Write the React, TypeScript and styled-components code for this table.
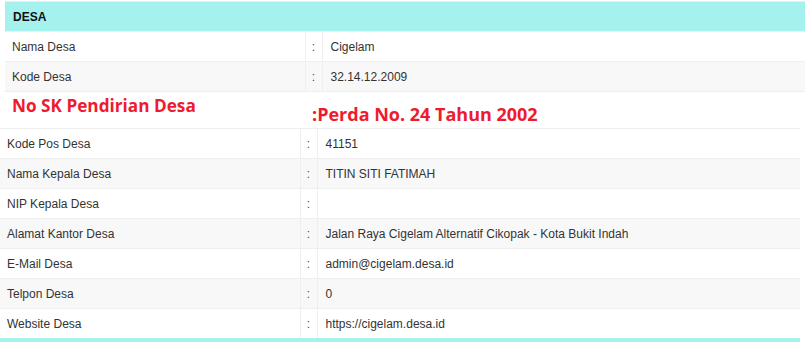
import styled, { createGlobalStyle } from "styled-components";

const GlobalStyle = createGlobalStyle`
  body {
    margin: 0;
    background: #fff;
    font-family: "Liberation Sans", Arial, sans-serif;
    font-size: 12px;
    color: #333;
  }
`;

type Row = { label: string; value: string };

const desaRows: Row[] = [
  { label: "Nama Desa", value: "Cigelam" },
  { label: "Kode Desa", value: "32.14.12.2009" },
];

const detailRows: Row[] = [
  { label: "Kode Pos Desa", value: "41151" },
  { label: "Nama Kepala Desa", value: "TITIN SITI FATIMAH" },
  { label: "NIP Kepala Desa", value: "" },
  { label: "Alamat Kantor Desa", value: "Jalan Raya Cigelam Alternatif Cikopak - Kota Bukit Indah" },
  { label: "E-Mail Desa", value: "admin@cigelam.desa.id" },
  { label: "Telpon Desa", value: "0" },
  { label: "Website Desa", value: "https://cigelam.desa.id" },
];

const Cols = ({ label }: { label: number }) => (
  <colgroup>
    <col style={{ width: label }} />
    <col style={{ width: 17 }} />
    <col />
  </colgroup>
);

export default function App() {
  return (
    <Page>
      <GlobalStyle />
      <DataTable $inset>
        <Cols label={300} />
        <thead>
          <tr>
            <HeadCell colSpan={3}>DESA</HeadCell>
          </tr>
        </thead>
        <tbody>
          {desaRows.map((r, i) => (
            <BodyRow key={r.label} $striped={i % 2 === 1}>
              <LabelCell>{r.label}</LabelCell>
              <ColonCell>:</ColonCell>
              <ValueCell>{r.value}</ValueCell>
            </BodyRow>
          ))}
        </tbody>
      </DataTable>

      <SkRow>
        <SkLabel>No SK Pendirian Desa</SkLabel>
        <SkValue>:Perda No. 24 Tahun 2002</SkValue>
      </SkRow>

      <DataTable $bottom>
        <Cols label={300} />
        <tbody>
          {detailRows.map((r, i) => (
            <BodyRow key={r.label} $striped={i % 2 === 1}>
              <LabelCell>{r.label}</LabelCell>
              <ColonCell $tint>:</ColonCell>
              <ValueCell>{r.value}</ValueCell>
            </BodyRow>
          ))}
        </tbody>
      </DataTable>
    </Page>
  );
}

const Page = styled.div`
  width: 805px;
  padding-top: 1px;
`;

const DataTable = styled.table<{ $inset?: boolean; $bottom?: boolean }>`
  border-collapse: collapse;
  table-layout: fixed;
  width: 800px;
  margin-left: ${(p) => (p.$inset ? "5px" : "0")};
  border-top: 1px solid #ececec;
  border-bottom: ${(p) => (p.$bottom ? "4px solid #a4f1ee" : "none")};
`;

const HeadCell = styled.th`
  height: 29px;
  padding: 0 8px;
  background: #a4f1ee;
  text-align: left;
  font-weight: bold;
  font-size: 12px;
  color: #111;
`;

const BodyRow = styled.tr<{ $striped: boolean }>`
  background: ${(p) => (p.$striped ? "#f8f8f8" : "#fff")};
  & > td {
    height: 29px;
    border-top: 1px solid #efefef;
    border-bottom: 1px solid #efefef;
  }
`;

const LabelCell = styled.td`
  padding: 0 7px;
  border-right: 1px solid #efefef;
`;

const ColonCell = styled.td<{ $tint?: boolean }>`
  padding: 0;
  text-align: center;
  color: ${(p) => (p.$tint ? "#7a2f55" : "#444")};
  border-right: 1px solid #efefef;
`;

const ValueCell = styled.td`
  padding: 0 8px;
`;

const SkRow = styled.div`
  display: grid;
  grid-template-columns: 300px 1fr;
  height: 36px;
  font-family: "Open Sans", "Noto Sans", sans-serif;
  font-weight: bold;
  color: #ee1b2e;
`;

const SkLabel = styled.div`
  padding: 2px 0 0 12px;
  font-size: 17.2px;
  line-height: 24px;
`;

const SkValue = styled.div`
  padding: 10px 0 0 12px;
  font-size: 18px;
  line-height: 24px;
`;
